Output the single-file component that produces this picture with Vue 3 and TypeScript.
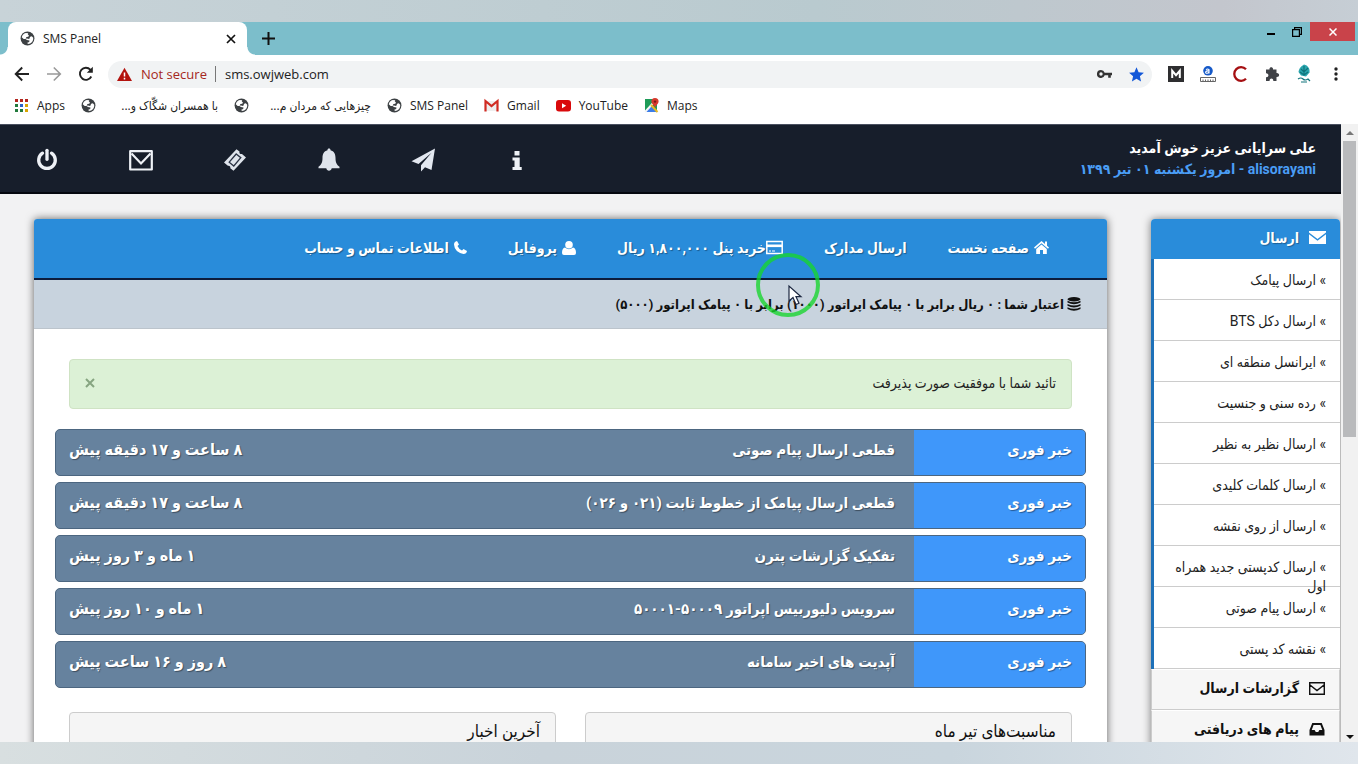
<script setup lang="ts">
import { ref } from 'vue'

interface NewsItem {
  title: string
  age: string
}

const address = ref('sms.owjweb.com')
const alertOpen = ref(true)

const news: NewsItem[] = [
  { title: 'قطعی ارسال پیام صوتی', age: '۸ ساعت و ۱۷ دقیقه پیش' },
  { title: 'قطعی ارسال پیامک از خطوط ثابت (۰۲۱ و ۰۲۶)', age: '۸ ساعت و ۱۷ دقیقه پیش' },
  { title: 'تفکیک گزارشات پترن', age: '۱ ماه و ۳ روز پیش' },
  { title: 'سرویس دلیوربیس اپراتور ۵۰۰۰۹-۵۰۰۰۱', age: '۱ ماه و ۱۰ روز پیش' },
  { title: 'آپدیت های اخیر سامانه', age: '۸ روز و ۱۶ ساعت پیش' },
]

const sendMenu: string[] = [
  'ارسال پیامک',
  'ارسال دکل BTS',
  'ایرانسل منطقه ای',
  'رده سنی و جنسیت',
  'ارسال نظیر به نظیر',
  'ارسال کلمات کلیدی',
  'ارسال از روی نقشه',
  'ارسال کدپستی جدید همراه اول',
  'ارسال پیام صوتی',
  'نقشه کد پستی',
]
</script>

<template>
  <svg class="symbols" aria-hidden="true">
    <symbol id="globe" viewBox="0 0 16 16">
      <circle cx="8" cy="8" r="7.4" fill="#3c4043" />
      <path d="M1.9 6.6C2.3 4.4 4 2.6 6.2 2.1l2.600.2-.5 1.300 1.200.9-.6 1.500-2 .5-1 1.700-2 .2zM10.800 6.200l1.800-.7 1.500 1.600c.3 2.600-1 5-3.300 6.300l-2.400.5-.6-1.400 2-.9.3-1.600-2.700-.5-1.900-1.200 1.900-.3 2.400.5z" fill="#fff" />
    </symbol>
  </svg>

  <div class="desk">
    <div class="browser">
      <div class="tabs">
        <div class="tab-edge"></div>
        <div class="tab">
          <svg class="i15"><use href="#globe" /></svg>
          <span class="tab-name">SMS Panel</span>
          <button class="plain" aria-label="Close tab">
            <svg class="i10" viewBox="0 0 10 10"><path d="M1 1l8 8M9 1L1 9" stroke="#111" stroke-width="1.700" /></svg>
          </button>
        </div>
        <button class="plain new-tab" aria-label="New tab">
          <svg class="i13" viewBox="0 0 13 13"><path d="M6.500 0v13M0 6.500h13" stroke="#111" stroke-width="2" /></svg>
        </button>
        <div class="window-keys">
          <button class="plain key" aria-label="Minimize">
            <svg class="i10" viewBox="0 0 10 10"><path d="M1 7h8" stroke="#000" stroke-width="2" /></svg>
          </button>
          <button class="plain key" aria-label="Restore">
            <svg class="i10" viewBox="0 0 10 10"><path d="M.6 2.600h6.800v6.800H.6zM2.600 2.500V.6h6.800v6.800h-2" fill="none" stroke="#000" stroke-width="1.200" /></svg>
          </button>
          <button class="plain close-key" aria-label="Close">
            <svg class="i8" viewBox="0 0 8 8"><path d="M.5.5l7 7M7.500.5l-7 7" stroke="#fff" stroke-width="1.500" /></svg>
          </button>
        </div>
      </div>

      <div class="toolbar">
        <button class="plain" aria-label="Back">
          <svg class="i16" viewBox="0 0 16 16"><path d="M15 8H2M8.200 1.500L1.700 8l6.500 6.500" fill="none" stroke="#222" stroke-width="1.900" /></svg>
        </button>
        <button class="plain" aria-label="Forward">
          <svg class="i16" viewBox="0 0 16 16"><path d="M1 8h13M7.800 1.500L14.300 8l-6.500 6.500" fill="none" stroke="#999" stroke-width="1.600" /></svg>
        </button>
        <button class="plain" aria-label="Reload">
          <svg class="i16" viewBox="0 0 16 16"><path d="M13.300 10.500A6 6 0 1 1 12.300 3.700L13.600 5" fill="none" stroke="#222" stroke-width="1.900" /><path d="M14.800.8v6H8.800z" fill="#222" /></svg>
        </button>
        <div class="omnibox">
          <svg class="i15" viewBox="0 0 15 15"><path d="M7.500.8L15 14H0z" fill="#b3130e" /><path d="M7.500 5.500v4M7.500 10.700v1.700" stroke="#fff" stroke-width="1.500" /></svg>
          <span class="insecure">Not secure</span>
          <input v-model="address" class="address" aria-label="Address" />
          <button class="plain" aria-label="Password">
            <svg class="key-icon" viewBox="0 0 15 10"><path d="M4 1a4 4 0 0 1 3.700 2.700H15v2.600h-1.200v2.500h-2.600V6.300H7.700A4 4 0 1 1 4 1zm0 2.300a1.700 1.700 0 1 0 0 3.400 1.700 1.700 0 0 0 0-3.400z" fill="#333" /></svg>
          </button>
          <button class="plain" aria-label="Bookmark">
            <svg class="i15" viewBox="0 0 15 15"><path d="M7.500.3l2.100 5 5.300.4-4 3.500 1.200 5.300-4.600-2.800-4.600 2.800 1.200-5.300-4-3.500 5.300-.4z" fill="#1257d8" /></svg>
          </button>
        </div>
        <div class="extensions">
          <svg class="i16" viewBox="0 0 16 16"><path d="M0 0h16v16H0z" fill="#2e2e30" /><path d="M4.200 12V4.800L8 9.200l3.800-4.400V12" fill="none" stroke="#fff" stroke-width="2" /></svg>
          <svg class="i16" viewBox="0 0 16 16"><circle cx="8" cy="4.800" r="4.800" fill="#1559c8" /><path d="M6 3.600q1.500-1.300 3 0v3.800M9 5c-4-.6-4.200 2.500-2 2.300q1.200 0 2-1.200" fill="none" stroke="#fff" stroke-width="1.100" /><path d="M.5 11.500h15v4H.5zM3 13.500v2M5.500 13.500v2M8 13.500v2M10.500 13.500v2M13 13.500v2" fill="none" stroke="#666" /></svg>
          <svg class="i16" viewBox="0 0 16 16"><path d="M14 3.300A6.800 6.800 0 1 0 14 12.700" fill="none" stroke="#a50f12" stroke-width="2.300" /></svg>
          <svg class="i16" viewBox="0 0 16 16"><path d="M2 3.500h3.500C5 .4 9.400.4 9 3.500h3.500V7c3.500-.4 3.500 4.400 0 4V15H9.300c.3-3.200-4-3.200-3.700 0H2v-3.700c3.200.2 3.200-4.200 0-4z" fill="#404247" /></svg>
          <svg class="ext-tall" viewBox="0 0 16 20"><path d="M8 .5c4 1 6 4 5.500 8L10 12.500l-5-1L2.500 8C3 5 4 3 8 .5z" fill="#2aa5ad" /><path d="M8 2v9M5 5l3 3 4-4M4 8l4 3 4-3M2 15q3-2 5 0t5 0l2 2M5 18h6" fill="none" stroke="#11747c" stroke-width="1.200" /></svg>
          <button class="plain" aria-label="Menu">
            <svg class="i16" viewBox="0 0 16 16"><g fill="#222"><circle cx="8" cy="3" r="1.700" /><circle cx="8" cy="8" r="1.700" /><circle cx="8" cy="13" r="1.700" /></g></svg>
          </button>
        </div>
      </div>

      <nav class="bookmarks" aria-label="Bookmarks">
        <a href="#apps">
          <svg class="i15" viewBox="0 0 15 15"><path d="M1 2.500h3M6 2.500h3M11 2.500h3" stroke="#b3261e" stroke-width="3" /><path d="M1 7.500h3" stroke="#217a3c" stroke-width="3" /><path d="M6 7.500h3" stroke="#2a62c9" stroke-width="3" /><path d="M11 7.500h3" stroke="#d9a400" stroke-width="3" /><path d="M1 12.500h3M6 12.500h3" stroke="#217a3c" stroke-width="3" /><path d="M11 12.500h3" stroke="#d9a400" stroke-width="3" /></svg>
          Apps
        </a>
        <a href="#b1" class="fa-mark"><svg class="i15"><use href="#globe" /></svg><span dir="rtl">با همسران شگّاک و...</span></a>
        <a href="#b2" class="fa-mark"><svg class="i15"><use href="#globe" /></svg><span dir="rtl">چیزهایی که مردان م...</span></a>
        <a href="#b3"><svg class="i15"><use href="#globe" /></svg>SMS Panel</a>
        <a href="#b4"><svg class="i15" viewBox="0 0 15 15"><path d="M2 3h11v10H2z" fill="#eee" /><path d="M1.500 13.500V3l6 5 6-5v10.500" fill="none" stroke="#d02b22" stroke-width="2.200" /></svg>Gmail</a>
        <a href="#b5"><svg class="i15" viewBox="0 0 15 15"><rect y="2" width="15" height="11.500" rx="3" fill="#d9090b" /><path d="M6 5.200l4.200 2.500L6 10.200z" fill="#fff" /></svg>YouTube</a>
        <a href="#b6"><svg class="i15" viewBox="0 0 15 15"><path d="M1 1h12v13H1z" fill="#1e9b58" /><path d="M1 14l6.500-7 6 7z" fill="#3c7de8" /><path d="M1 14L12 2" stroke="#f6f6f6" stroke-width="2" /><path d="M7 7l6.500 7" stroke="#e8b921" stroke-width="2" /><path d="M11 0a3.600 3.600 0 0 1 3.600 3.600C14.600 6 12 7 11 10 10 7 7.400 6 7.400 3.600A3.600 3.600 0 0 1 11 0z" fill="#d5392c" /><circle cx="11" cy="3.600" r="1.200" fill="#7c1812" /></svg>Maps</a>
      </nav>

      <div class="viewport">
        <div class="page">
          <header class="top">
            <div class="quick">
              <a href="#exit" aria-label="خروج"><svg class="i24" viewBox="0 0 24 24"><path d="M7.500 5.200a8.300 8.300 0 1 0 9 0" fill="none" stroke="#eef1f6" stroke-width="3.300" stroke-linecap="round" /><path d="M12 2.300v9" stroke="#eef1f6" stroke-width="3.300" stroke-linecap="round" /></svg></a>
              <a href="#mail" aria-label="پیام"><svg class="i24" viewBox="0 0 24 24"><path d="M1.200 3.200h21.600v18.300H1.200z" fill="none" stroke="#eef1f6" stroke-width="2.200" stroke-linejoin="round" /><path d="M2.500 5.500L12 15.500l9.500-10" fill="none" stroke="#eef1f6" stroke-width="2.200" /></svg></a>
              <a href="#ticket" aria-label="تیکت"><svg class="i24" viewBox="0 0 24 24"><path d="M13.500 1.200l3 2.200q-.6 2.800 2.500 2.600l4 3.400L10.500 22.800l-3.200-2.600q.5-2.800-2.400-2.500L1 14.500z" fill="#dfe4ec" /><path d="M13.200 6l4.600 3.700-7 8.300-4.600-3.800z" fill="none" stroke="#2a3344" stroke-width="1.300" /></svg></a>
              <a href="#bell" aria-label="اعلان"><svg class="i24" viewBox="0 0 24 24"><path d="M12 .5c1 0 1.600.7 1.500 1.700 3.600.9 5 4 5 7.500 0 4.800 1.200 7 4 9.100v1.400h-7.800c-.3 3.300-5.100 3.300-5.400 0H1.500v-1.400c2.800-2.100 4-4.300 4-9.100 0-3.500 1.400-6.600 5-7.500C10.400 1.200 11 .5 12 .5z" fill="#dfe4ec" /></svg></a>
              <a href="#send" aria-label="ارسال"><svg class="i24" viewBox="0 0 24 24"><path d="M24 .5L20.500 22l-6.500-2.700-4 4.200v-6.300L20.500 4.800 7.500 16 .5 13.200z" fill="#e3e8f0" /></svg></a>
              <a href="#info" aria-label="اطلاعات"><svg class="i24" viewBox="0 0 24 24"><path d="M9.500 3h5v4.500h-5zM7.500 9.500h7.200V19h2v3h-9.200v-3h2v-6.500h-2z" fill="#eef1f6" /></svg></a>
            </div>
            <div class="welcome" dir="rtl">
              <strong>علی سرایانی عزیز خوش آمدید</strong>
              <span>alisorayani - امروز یکشنبه ۰۱ تیر ۱۳۹۹</span>
            </div>
          </header>

          <div class="columns" dir="rtl">
            <aside class="side">
              <button class="side-title">
                <svg class="i17" viewBox="0 0 17 17"><path d="M0 3.500L8.500 10 17 3.500V2H0zM0 5.300V15h17V5.300l-8.500 6.500z" fill="#fff" /></svg>
                ارسال
              </button>
              <ul class="side-list">
                <li v-for="item in sendMenu" :key="item"><a href="#send">» {{ item }}</a></li>
              </ul>
              <button class="side-more">
                <svg class="i16" viewBox="0 0 16 16"><path d="M.7 2.700h14.600v11.600H.7zM.7 4.800L8 10.500l7.300-5.700" fill="none" stroke="#111" stroke-width="1.400" /></svg>
                گزارشات ارسال
              </button>
              <button class="side-more">
                <svg class="i16" viewBox="0 0 16 16"><path d="M3.300 2h9.400L15.500 9v5.500H.5V9zM4.600 4L2.700 9h2.900l1.200 2h2.400l1.200-2h2.900l-1.900-5z" fill="#111" fill-rule="evenodd" /></svg>
                پیام های دریافتی
              </button>
            </aside>

            <main class="card">
              <nav class="menu">
                <a href="#home"><svg class="i15" viewBox="0 0 15 15"><path d="M7.500 1L0 7.500l1 1.200L7.500 3.200 14 8.700l1-1.200-2-1.800V1.500h-2V4zM7.500 4.400L2.200 9v5H6v-4h3v4h3.800V9z" fill="#fff" /></svg> صفحه نخست</a>
                <a href="#docs">ارسال مدارک</a>
                <a href="#buy" class="tight"><svg class="i17" viewBox="0 0 17 17"><path d="M.8 2.500h15.400v12H.8z" fill="none" stroke="#fff" stroke-width="1.500" /><path d="M1 6.800h15" stroke="#fff" stroke-width="2.600" /><path d="M3 12h2M6 12h3" stroke="#fff" /></svg>خرید پنل ۱,۸۰۰,۰۰۰ ریال</a>
                <a href="#profile"><svg class="i14" viewBox="0 0 14 14"><circle cx="7" cy="3.800" r="3.800" fill="#fff" /><path d="M3 6.500Q0 7 0 12q0 2 2 2h10q2 0 2-2 0-5-3-5.500Q7 10 3 6.500z" fill="#fff" /></svg> پروفایل</a>
                <a href="#contact"><svg class="i13" viewBox="0 0 13 13"><path d="M3 0l2 3.500-1.500 1.500q1.300 3 4.500 4.500L9.500 8 13 10q-.5 3-3.500 3Q.5 11 0 3.500 0 .5 3 0z" fill="#fff" /></svg> اطلاعات تماس و حساب</a>
              </nav>
              <p class="credit">
                <svg class="i14" viewBox="0 0 14 14"><g fill="#111"><ellipse cx="7" cy="2.200" rx="6.500" ry="2.200" /><path d="M.5 3.800q6.500 3 13 0v1.700q-6.500 3.400-13 0zM.5 7q6.500 3 13 0v1.700q-6.500 3.400-13 0zM.5 10.200q6.500 3 13 0v1.700q-6.500 3.600-13 0z" /></g></svg>
                اعتبار شما : ۰ ریال برابر با ۰ پیامک اپراتور (۱۰۰۰) برابر با ۰ پیامک اپراتور (۵۰۰۰)
              </p>
              <div class="content">
                <div v-if="alertOpen" class="alert" role="status">
                  <span>تائید شما با موفقیت صورت پذیرفت</span>
                  <button class="plain" aria-label="بستن" @click="alertOpen = false">
                    <svg class="i10" viewBox="0 0 10 10"><path d="M1 1l8 8M9 1L1 9" stroke="#86a581" stroke-width="2" /></svg>
                  </button>
                </div>
                <div class="news">
                  <a v-for="item in news" :key="item.title" href="#news" class="row">
                    <span class="badge">خبر فوری</span>
                    <span class="title">{{ item.title }}</span>
                    <span class="age">{{ item.age }}</span>
                  </a>
                </div>
                <div class="panels">
                  <section class="panel"><h2>مناسبت‌های تیر ماه</h2></section>
                  <section class="panel"><h2>آخرین اخبار</h2></section>
                </div>
              </div>
              <svg class="pointer" viewBox="0 0 64 64" aria-hidden="true">
                <circle cx="32" cy="32" r="30" fill="none" stroke="#16d62b" stroke-opacity=".78" stroke-width="4" />
                <path d="M33 33v15l4-3.500 3 7 3-1.300-3-6.500h5z" fill="#fff" stroke="#1c2740" stroke-width="1.200" />
              </svg>
            </main>
          </div>
        </div>

        <div class="scroll" aria-hidden="true">
          <svg class="i8" viewBox="0 0 8 8"><path d="M0 6l4-4 4 4z" fill="#777" /></svg>
          <div class="thumb"></div>
          <svg class="i8" viewBox="0 0 8 8"><path d="M0 2l4 4 4-4z" fill="#111" /></svg>
        </div>
      </div>
    </div>
  </div>
</template>

<style>
body {
  margin: 0;
}
</style>

<style scoped>
* {
  box-sizing: border-box;
}
.symbols {
  display: none;
}
svg {
  flex: none;
}
a {
  color: inherit;
  text-decoration: none;
}
button {
  font: inherit;
  cursor: pointer;
}
.plain {
  display: flex;
  align-items: center;
  justify-content: center;
  padding: 0;
  border: 0;
  background: none;
}
.i8 { width: 8px; height: 8px; }
.i10 { width: 10px; height: 10px; }
.i13 { width: 13px; height: 13px; }
.i14 { width: 14px; height: 14px; }
.i15 { width: 15px; height: 15px; }
.i16 { width: 16px; height: 16px; }
.i17 { width: 17px; height: 17px; }
.i24 { width: 24px; height: 24px; }

.desk {
  height: 100vh;
  padding: 22px 0;
  background:
    linear-gradient(90deg, #c8d3d8, #b9cacf 60%, #c3c6cd 90%, #c6ced5) top / 100% 22px no-repeat,
    linear-gradient(90deg, #d8dfe0, #c9d3da 40%, #c9d5dd 70%, #e0e6ec);
  font-family: "Open Sans", "DejaVu Sans Condensed", "DejaVu Sans", sans-serif;
  font-size: 12px;
  color: #222;
}
.browser {
  display: flex;
  flex-direction: column;
  height: 100%;
  background: #fff;
}

.tabs {
  display: flex;
  height: 33px;
  background: #7cbecb;
}
.tab-edge {
  width: 8px;
  background: radial-gradient(circle at 0 0, #7cbecb 7px, #fff 8px) bottom / 8px 8px no-repeat;
}
.tab {
  display: flex;
  align-items: center;
  gap: 8px;
  width: 239px;
  padding: 0 11px 0 12px;
  background: #fff;
  border-radius: 8px 8px 0 0;
}
.tab-name {
  flex: 1;
}
.new-tab {
  width: 42px;
  background: radial-gradient(circle at 8px 0, #7cbecb 7px, #fff 8px) bottom left / 8px 8px no-repeat;
}
.window-keys {
  display: flex;
  align-items: flex-start;
  margin-left: auto;
  padding-right: 3px;
}
.key {
  width: 26px;
  height: 19px;
}
.close-key {
  width: 45px;
  height: 19px;
  background: #c9434a;
}

.toolbar {
  display: flex;
  align-items: center;
  gap: 16px;
  height: 38px;
  padding: 0 14px;
}
.omnibox {
  display: flex;
  flex: 1;
  align-items: center;
  gap: 9px;
  height: 27px;
  padding: 0 8px 0 9px;
  margin-left: -2px;
  border-radius: 14px;
  background: #f1f3f4;
  font-size: 13px;
}
.insecure {
  padding-right: 8px;
  border-right: 1px solid #777;
  line-height: 16px;
  color: #a52720;
}
.address {
  flex: 1;
  min-width: 0;
  padding: 0;
  border: 0;
  background: none;
  font: inherit;
  color: #222;
}
.key-icon {
  width: 15px;
  height: 10px;
  margin-right: 8px;
}
.extensions {
  display: flex;
  align-items: center;
  gap: 16px;
}
.ext-tall {
  width: 16px;
  height: 20px;
}

.bookmarks {
  display: flex;
  align-items: center;
  gap: 16px;
  height: 31px;
  padding: 0 14px 6px;
}
.bookmarks a {
  display: flex;
  align-items: center;
  gap: 8px;
}
.fa-mark span {
  width: 114px;
  font-size: 12px;
  white-space: nowrap;
}

.viewport {
  display: flex;
  flex: 1;
  min-height: 0;
}
.page {
  flex: 1;
  min-width: 0;
  overflow: hidden;
  background: #f2f2f3;
  font-family: Roboto, "DejaVu Sans Condensed", "DejaVu Sans", sans-serif;
  font-size: 14px;
}
.top {
  display: flex;
  justify-content: space-between;
  align-items: center;
  height: 70px;
  background: #171e2b;
  border-top: 1px solid #4a5060;
  border-bottom: 2px solid #05080f;
}
.quick {
  display: flex;
}
.quick a {
  display: flex;
  justify-content: center;
  width: 94px;
  padding-top: 2px;
}
.welcome {
  display: flex;
  flex-direction: column;
  padding-right: 25px;
  line-height: 21px;
  font-weight: bold;
  color: #fff;
}
.welcome span {
  color: #4a9df5;
}

.columns {
  display: flex;
  gap: 44px;
  padding: 25px 1px 0 34px;
}
.side {
  width: 189px;
  align-self: flex-start;
  border-radius: 4px;
  box-shadow: 0 0 8px rgba(0, 0, 0, 0.5);
}
.side-title,
.side-more {
  display: flex;
  align-items: center;
  gap: 10px;
  width: 100%;
  height: 40px;
  padding: 0 14px 3px;
  border: 0;
  font-size: 14px;
  font-weight: bold;
}
.side-title {
  background: #298cda;
  border-radius: 4px 4px 0 0;
  color: #fff;
  text-shadow: 1px 1px 1px rgba(0, 0, 0, 0.3);
}
.side-list {
  margin: 0;
  padding: 0;
  list-style: none;
  background: #fff;
  border-left: 3px solid #1d70b8;
}
.side-list li {
  height: 41px;
  padding: 12px 14px 0;
  border-bottom: 1px solid #ccc;
  line-height: 19px;
}
.side-more {
  height: 41px;
  background: #f6f6f6;
  border: 1px solid #ccc;
  border-top-color: #fff;
  color: #111;
}

.card {
  position: relative;
  flex: 1;
  min-width: 0;
  background: #fff;
  border-radius: 3px 3px 0 0;
  box-shadow: 0 0 8px rgba(0, 0, 0, 0.6);
}
.menu {
  display: flex;
  align-items: center;
  gap: 41px;
  height: 61px;
  padding: 0 58px 2px;
  background: #298cda;
  border-bottom: 2px solid #0c1c3c;
  border-radius: 3px 3px 0 0;
  color: #fff;
  font-size: 14px;
  font-weight: bold;
  text-shadow: 1px 1px 1px rgba(0, 0, 0, 0.35);
}
.menu a {
  display: flex;
  align-items: center;
  gap: 5px;
  white-space: nowrap;
}
.menu .tight {
  gap: 0;
}
.credit {
  display: flex;
  align-items: center;
  gap: 3px;
  height: 49px;
  margin: 0;
  padding: 0 26px;
  background: #c8d3de;
  border-bottom: 1px solid #bcc4cc;
  font-size: 13px;
  font-weight: bold;
  color: #111;
}
.content {
  padding: 30px 21px 0;
}
.alert {
  display: flex;
  align-items: center;
  justify-content: space-between;
  height: 50px;
  margin: 0 14px 20px;
  padding: 0 15px 2px;
  border: 1px solid #cfe3c4;
  border-radius: 4px;
  background: #dcf1d6;
}
.news {
  display: flex;
  flex-direction: column;
  gap: 6px;
}
.row {
  display: flex;
  height: 47px;
  overflow: hidden;
  border: 1px solid #4c6680;
  border-radius: 5px;
  background: #66829e;
  font-size: 15px;
  font-weight: bold;
  line-height: 40px;
  color: #fff;
  text-shadow: 1px 1px 1px rgba(0, 0, 0, 0.4);
}
.badge {
  width: 171px;
  padding-right: 13px;
  background: #3f97fa;
}
.title {
  flex: 1;
  padding-right: 19px;
}
.age {
  padding-left: 13px;
  font-size: 16px;
}
.panels {
  display: flex;
  gap: 29px;
  margin: 24px 14px 0;
}
.panel {
  flex: 1;
  height: 200px;
  border: 1px solid #ccc;
  border-radius: 4px;
  background: #f5f5f5;
}
.panel h2 {
  margin: 0;
  padding: 0 15px;
  font-size: 17px;
  font-weight: 500;
  line-height: 36px;
  color: #111;
}
.pointer {
  position: absolute;
  left: 722px;
  top: 34px;
  width: 64px;
  height: 64px;
  pointer-events: none;
}

.scroll {
  display: flex;
  flex-direction: column;
  align-items: center;
  width: 17px;
  padding: 5px 0 1px;
  background: #f1f1f1;
}
.thumb {
  width: 13px;
  height: 296px;
  margin: 4px 0 auto;
  background: #b9babc;
}
</style>
